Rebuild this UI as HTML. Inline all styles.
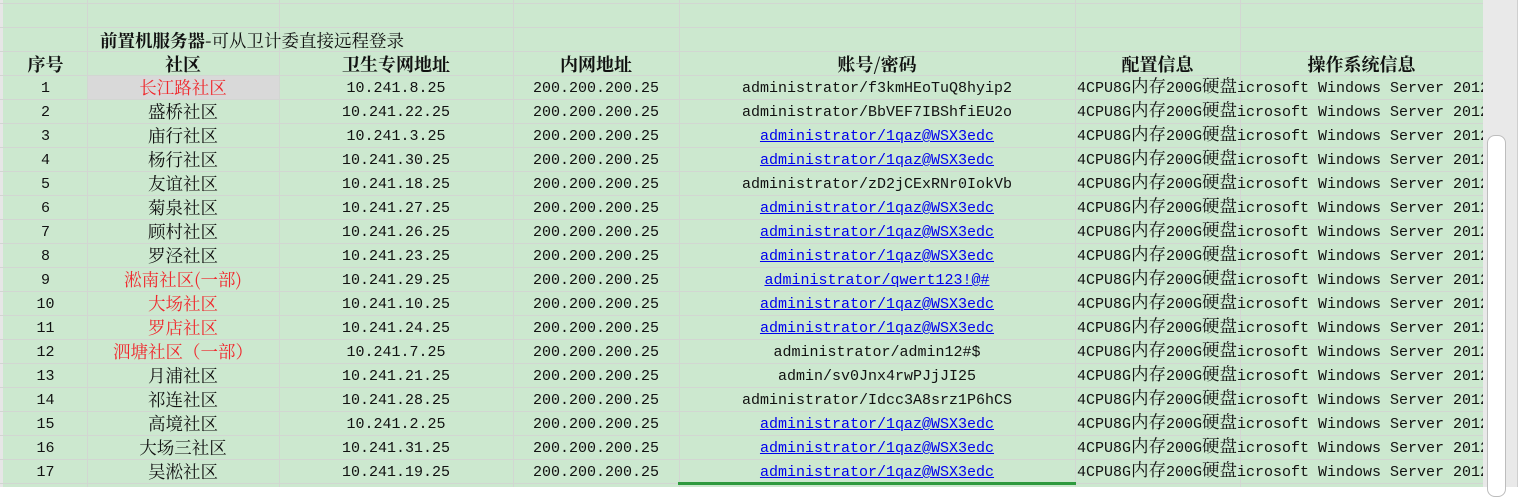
<!DOCTYPE html>
<html><head><meta charset="utf-8">
<style>
body{margin:0;width:1526px;height:487px;overflow:hidden;background:#fff;position:relative;font-family:"Liberation Mono","Noto Serif CJK SC",monospace;font-size:15px;color:#111}
#sheet{position:absolute;left:0;top:0;width:1483px;height:487px;background:#cce8cf;overflow:hidden}
.v{position:absolute;top:0;width:1px;height:487px;background:#d2d6d2}
.h{position:absolute;left:0;width:1483px;height:1px;background:#d2d6d2}
.c{position:absolute;height:24px;line-height:26px;text-align:center;white-space:nowrap}
.a{left:4px;width:83px}
.b{left:87px;width:192px;font-family:"Noto Serif CJK SC",serif;font-size:17.5px;line-height:24px}
.cc{left:279px;width:234px}
.d{left:513px;width:166px}
.e{left:679px;width:396px}
.f{left:1077px;text-align:left}
.g{left:1237px;text-align:left}
.k{font-family:"Noto Serif CJK SC",serif;font-size:17.5px;line-height:0}
.red{color:#f0282d}
a{color:#0000ee;text-decoration:underline}
.hd{font-family:"Noto Serif CJK SC",serif;font-weight:bold;font-size:18px;line-height:24px}
</style></head><body>
<div id="sheet">
<div style="position:absolute;left:0;top:0;width:3px;height:487px;background:#e6e6e6"></div>
<div class="h" style="top:3px"></div>
<div class="h" style="top:27px"></div>
<div class="h" style="top:51px"></div>
<div class="h" style="top:75px"></div>
<div class="h" style="top:99px"></div><div class="h" style="top:123px"></div><div class="h" style="top:147px"></div><div class="h" style="top:171px"></div><div class="h" style="top:195px"></div><div class="h" style="top:219px"></div><div class="h" style="top:243px"></div><div class="h" style="top:267px"></div><div class="h" style="top:291px"></div><div class="h" style="top:315px"></div><div class="h" style="top:339px"></div><div class="h" style="top:363px"></div><div class="h" style="top:387px"></div><div class="h" style="top:411px"></div><div class="h" style="top:435px"></div><div class="h" style="top:459px"></div><div class="h" style="top:483px"></div>
<div class="v" style="left:87px"></div>
<div class="v" style="left:279px"></div>
<div class="v" style="left:513px"></div>
<div class="v" style="left:679px"></div>
<div class="v" style="left:1075px"></div>
<div class="v" style="left:1240px"></div>
<div style="position:absolute;left:88px;top:76px;width:191px;height:23px;background:#d9d9d9"></div>
<div style="position:absolute;left:100px;top:28px;height:24px;line-height:26px;font-family:'Noto Serif CJK SC',serif;font-size:17.5px;white-space:nowrap"><b>前置机服务器-</b>可从卫计委直接远程登录</div>
<div class="c a hd" style="top:52px">序号</div><div class="c b hd" style="top:52px">社区</div><div class="c cc hd" style="top:52px">卫生专网地址</div><div class="c d hd" style="top:52px">内网地址</div><div class="c e hd" style="top:52px">账号/密码</div><div class="c hd" style="top:52px;left:1075px;width:165px">配置信息</div><div class="c hd" style="top:52px;left:1240px;width:243px">操作系统信息</div>

<div class="c a" style="top:76px">1</div><div class="c b red" style="top:76px">长江路社区</div><div class="c cc" style="top:76px">10.241.8.25</div><div class="c d" style="top:76px">200.200.200.25</div><div class="c e" style="top:76px">administrator/f3kmHEoTuQ8hyip2</div><div class="c f" style="top:76px">4CPU8G<span class="k">内存</span>200G<span class="k">硬盘</span></div><div class="c g" style="top:76px">icrosoft Windows Server 2012</div>
<div class="c a" style="top:100px">2</div><div class="c b" style="top:100px">盛桥社区</div><div class="c cc" style="top:100px">10.241.22.25</div><div class="c d" style="top:100px">200.200.200.25</div><div class="c e" style="top:100px">administrator/BbVEF7IBShfiEU2o</div><div class="c f" style="top:100px">4CPU8G<span class="k">内存</span>200G<span class="k">硬盘</span></div><div class="c g" style="top:100px">icrosoft Windows Server 2012</div>
<div class="c a" style="top:124px">3</div><div class="c b" style="top:124px">庙行社区</div><div class="c cc" style="top:124px">10.241.3.25</div><div class="c d" style="top:124px">200.200.200.25</div><div class="c e" style="top:124px"><a>administrator/1qaz@WSX3edc</a></div><div class="c f" style="top:124px">4CPU8G<span class="k">内存</span>200G<span class="k">硬盘</span></div><div class="c g" style="top:124px">icrosoft Windows Server 2012</div>
<div class="c a" style="top:148px">4</div><div class="c b" style="top:148px">杨行社区</div><div class="c cc" style="top:148px">10.241.30.25</div><div class="c d" style="top:148px">200.200.200.25</div><div class="c e" style="top:148px"><a>administrator/1qaz@WSX3edc</a></div><div class="c f" style="top:148px">4CPU8G<span class="k">内存</span>200G<span class="k">硬盘</span></div><div class="c g" style="top:148px">icrosoft Windows Server 2012</div>
<div class="c a" style="top:172px">5</div><div class="c b" style="top:172px">友谊社区</div><div class="c cc" style="top:172px">10.241.18.25</div><div class="c d" style="top:172px">200.200.200.25</div><div class="c e" style="top:172px">administrator/zD2jCExRNr0IokVb</div><div class="c f" style="top:172px">4CPU8G<span class="k">内存</span>200G<span class="k">硬盘</span></div><div class="c g" style="top:172px">icrosoft Windows Server 2012</div>
<div class="c a" style="top:196px">6</div><div class="c b" style="top:196px">菊泉社区</div><div class="c cc" style="top:196px">10.241.27.25</div><div class="c d" style="top:196px">200.200.200.25</div><div class="c e" style="top:196px"><a>administrator/1qaz@WSX3edc</a></div><div class="c f" style="top:196px">4CPU8G<span class="k">内存</span>200G<span class="k">硬盘</span></div><div class="c g" style="top:196px">icrosoft Windows Server 2012</div>
<div class="c a" style="top:220px">7</div><div class="c b" style="top:220px">顾村社区</div><div class="c cc" style="top:220px">10.241.26.25</div><div class="c d" style="top:220px">200.200.200.25</div><div class="c e" style="top:220px"><a>administrator/1qaz@WSX3edc</a></div><div class="c f" style="top:220px">4CPU8G<span class="k">内存</span>200G<span class="k">硬盘</span></div><div class="c g" style="top:220px">icrosoft Windows Server 2012</div>
<div class="c a" style="top:244px">8</div><div class="c b" style="top:244px">罗泾社区</div><div class="c cc" style="top:244px">10.241.23.25</div><div class="c d" style="top:244px">200.200.200.25</div><div class="c e" style="top:244px"><a>administrator/1qaz@WSX3edc</a></div><div class="c f" style="top:244px">4CPU8G<span class="k">内存</span>200G<span class="k">硬盘</span></div><div class="c g" style="top:244px">icrosoft Windows Server 2012</div>
<div class="c a" style="top:268px">9</div><div class="c b red" style="top:268px">淞南社区(一部)</div><div class="c cc" style="top:268px">10.241.29.25</div><div class="c d" style="top:268px">200.200.200.25</div><div class="c e" style="top:268px"><a>administrator/qwert123!@#</a></div><div class="c f" style="top:268px">4CPU8G<span class="k">内存</span>200G<span class="k">硬盘</span></div><div class="c g" style="top:268px">icrosoft Windows Server 2012</div>
<div class="c a" style="top:292px">10</div><div class="c b red" style="top:292px">大场社区</div><div class="c cc" style="top:292px">10.241.10.25</div><div class="c d" style="top:292px">200.200.200.25</div><div class="c e" style="top:292px"><a>administrator/1qaz@WSX3edc</a></div><div class="c f" style="top:292px">4CPU8G<span class="k">内存</span>200G<span class="k">硬盘</span></div><div class="c g" style="top:292px">icrosoft Windows Server 2012</div>
<div class="c a" style="top:316px">11</div><div class="c b red" style="top:316px">罗店社区</div><div class="c cc" style="top:316px">10.241.24.25</div><div class="c d" style="top:316px">200.200.200.25</div><div class="c e" style="top:316px"><a>administrator/1qaz@WSX3edc</a></div><div class="c f" style="top:316px">4CPU8G<span class="k">内存</span>200G<span class="k">硬盘</span></div><div class="c g" style="top:316px">icrosoft Windows Server 2012</div>
<div class="c a" style="top:340px">12</div><div class="c b red" style="top:340px">泗塘社区（一部）</div><div class="c cc" style="top:340px">10.241.7.25</div><div class="c d" style="top:340px">200.200.200.25</div><div class="c e" style="top:340px">administrator/admin12#$</div><div class="c f" style="top:340px">4CPU8G<span class="k">内存</span>200G<span class="k">硬盘</span></div><div class="c g" style="top:340px">icrosoft Windows Server 2012</div>
<div class="c a" style="top:364px">13</div><div class="c b" style="top:364px">月浦社区</div><div class="c cc" style="top:364px">10.241.21.25</div><div class="c d" style="top:364px">200.200.200.25</div><div class="c e" style="top:364px">admin/sv0Jnx4rwPJjJI25</div><div class="c f" style="top:364px">4CPU8G<span class="k">内存</span>200G<span class="k">硬盘</span></div><div class="c g" style="top:364px">icrosoft Windows Server 2012</div>
<div class="c a" style="top:388px">14</div><div class="c b" style="top:388px">祁连社区</div><div class="c cc" style="top:388px">10.241.28.25</div><div class="c d" style="top:388px">200.200.200.25</div><div class="c e" style="top:388px">administrator/Idcc3A8srz1P6hCS</div><div class="c f" style="top:388px">4CPU8G<span class="k">内存</span>200G<span class="k">硬盘</span></div><div class="c g" style="top:388px">icrosoft Windows Server 2012</div>
<div class="c a" style="top:412px">15</div><div class="c b" style="top:412px">高境社区</div><div class="c cc" style="top:412px">10.241.2.25</div><div class="c d" style="top:412px">200.200.200.25</div><div class="c e" style="top:412px"><a>administrator/1qaz@WSX3edc</a></div><div class="c f" style="top:412px">4CPU8G<span class="k">内存</span>200G<span class="k">硬盘</span></div><div class="c g" style="top:412px">icrosoft Windows Server 2012</div>
<div class="c a" style="top:436px">16</div><div class="c b" style="top:436px">大场三社区</div><div class="c cc" style="top:436px">10.241.31.25</div><div class="c d" style="top:436px">200.200.200.25</div><div class="c e" style="top:436px"><a>administrator/1qaz@WSX3edc</a></div><div class="c f" style="top:436px">4CPU8G<span class="k">内存</span>200G<span class="k">硬盘</span></div><div class="c g" style="top:436px">icrosoft Windows Server 2012</div>
<div class="c a" style="top:460px">17</div><div class="c b" style="top:460px">吴淞社区</div><div class="c cc" style="top:460px">10.241.19.25</div><div class="c d" style="top:460px">200.200.200.25</div><div class="c e" style="top:460px"><a>administrator/1qaz@WSX3edc</a></div><div class="c f" style="top:460px">4CPU8G<span class="k">内存</span>200G<span class="k">硬盘</span></div><div class="c g" style="top:460px">icrosoft Windows Server 2012</div>
<div style="position:absolute;left:678px;top:482px;width:398px;height:3px;background:#2e9a3e"></div>
</div>
<div style="position:absolute;left:1483px;top:0;width:34px;height:487px;background:#e9e9e9;border-right:1px solid #cfcfcf"></div>
<div style="position:absolute;left:1487px;top:135px;width:17px;height:360px;background:#fff;border:1px solid #bdbdbd;border-radius:8px"></div>
</body></html>
